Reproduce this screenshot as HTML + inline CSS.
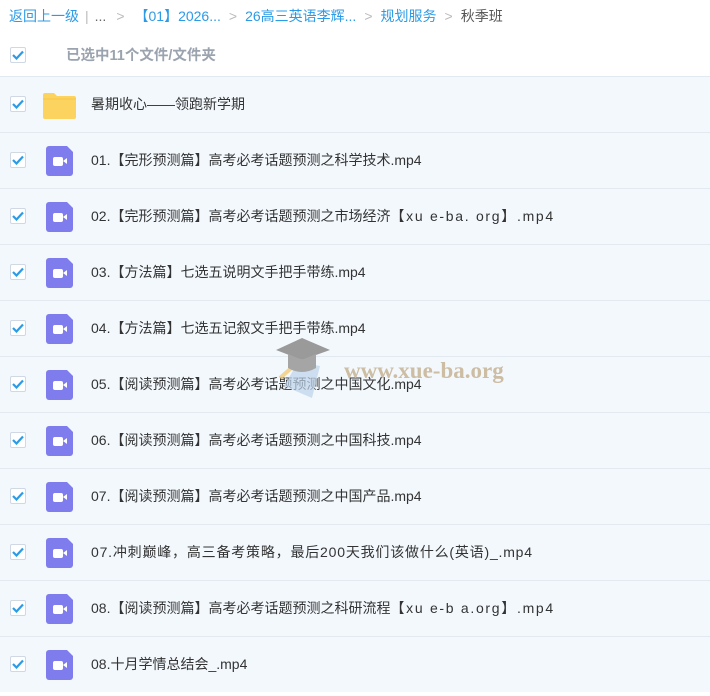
<!DOCTYPE html>
<html><head><meta charset="utf-8"><style>
*{margin:0;padding:0;box-sizing:border-box}
body{width:710px;height:696px;background:#fff;font-family:"Liberation Sans","Noto Sans CJK SC",sans-serif;font-size:14px;color:#333;position:relative;overflow:hidden}
.bc{position:absolute;left:9px;top:6px;height:20px;line-height:20px;color:#2c9be6;white-space:nowrap}
.bc .g{color:#bbb;margin:0 6px}
.bc .d{color:#555}
.cb{position:absolute;width:16px;height:16px;border:1px solid #cfd8e3;border-radius:2px;background:#fff}
.cb svg{position:absolute;left:1px;top:2px}
.hd{position:absolute;top:46px;left:0;width:710px;height:20px}
.hd .t{position:absolute;left:66px;top:0;line-height:20px;color:#9aa3ae;font-weight:bold;font-size:14.5px}
.row{position:absolute;left:0;width:710px;height:56px;background:#f3f8fd;border-top:1px solid #e3e9f0}
.row .cb{left:10px;top:19px}
.row .n{position:absolute;left:91px;top:0;line-height:55px;white-space:nowrap}
.vi{position:absolute;left:46px;top:13px;width:27px;height:30px;background:#7f7ced;border-radius:3px}
.vi:after{content:"";position:absolute;right:0;top:0;border-style:solid;border-width:0 6px 6px 0;border-color:transparent #f3f8fd transparent transparent}
.vi i{position:absolute;left:7px;top:11px;width:10px;height:9px;background:#fff;border-radius:2px}
.vi b{position:absolute;left:17px;top:12px;width:0;height:0;border-top:3.5px solid transparent;border-bottom:3.5px solid transparent;border-right:4px solid #fff}
.fo{position:absolute;left:43px;top:15px;width:33px;height:27px}
.w{letter-spacing:1.7px}
</style></head><body>
<div class="bc">返回上一级<span class="g">|</span><span class="d" style="color:#666">...</span><span class="g" style="margin:0 10px">&gt;</span>【01】2026...<span class="g" style="margin:0 8px">&gt;</span>26高三英语李辉...<span class="g" style="margin:0 8px">&gt;</span>规划服务<span class="g" style="margin:0 8px">&gt;</span><span class="d">秋季班</span></div>
<div class="hd"><div class="cb" style="left:10px;top:1px"><svg width="12" height="10" viewBox="0 0 12 10"><path d="M1 5l3.5 3.5L11 1.5" stroke="#2c9be6" stroke-width="2.2" fill="none"/></svg></div><div class="t">已选中11个文件/文件夹</div></div>

<div class="row" style="top:76px"><div class="cb"><svg width="12" height="10" viewBox="0 0 12 10"><path d="M1 5l3.5 3.5L11 1.5" stroke="#2c9be6" stroke-width="2.2" fill="none"/></svg></div>
<svg class="fo" viewBox="0 0 33 27"><path d="M0 3a2 2 0 0 1 2-2h9l3 3h17a2 2 0 0 1 2 2v19a2 2 0 0 1-2 2H2a2 2 0 0 1-2-2z" fill="#fdd35f"/><path d="M0 7h33" stroke="#f7c64a" stroke-width="1"/></svg>
<div class="n">暑期收心——领跑新学期</div></div>

<div class="row" style="top:132px"><div class="cb"><svg width="12" height="10" viewBox="0 0 12 10"><path d="M1 5l3.5 3.5L11 1.5" stroke="#2c9be6" stroke-width="2.2" fill="none"/></svg></div><div class="vi"><i></i><b></b></div><div class="n">01.【完形预测篇】高考必考话题预测之科学技术.mp4</div></div>
<div class="row" style="top:188px"><div class="cb"><svg width="12" height="10" viewBox="0 0 12 10"><path d="M1 5l3.5 3.5L11 1.5" stroke="#2c9be6" stroke-width="2.2" fill="none"/></svg></div><div class="vi"><i></i><b></b></div><div class="n">02.【完形预测篇】高考必考话题预测之市场经济<span class="w">【xu e-ba. org】.mp4</span></div></div>
<div class="row" style="top:244px"><div class="cb"><svg width="12" height="10" viewBox="0 0 12 10"><path d="M1 5l3.5 3.5L11 1.5" stroke="#2c9be6" stroke-width="2.2" fill="none"/></svg></div><div class="vi"><i></i><b></b></div><div class="n">03.【方法篇】七选五说明文手把手带练.mp4</div></div>
<div class="row" style="top:300px"><div class="cb"><svg width="12" height="10" viewBox="0 0 12 10"><path d="M1 5l3.5 3.5L11 1.5" stroke="#2c9be6" stroke-width="2.2" fill="none"/></svg></div><div class="vi"><i></i><b></b></div><div class="n">04.【方法篇】七选五记叙文手把手带练.mp4</div></div>
<div class="row" style="top:356px"><div class="cb"><svg width="12" height="10" viewBox="0 0 12 10"><path d="M1 5l3.5 3.5L11 1.5" stroke="#2c9be6" stroke-width="2.2" fill="none"/></svg></div><div class="vi"><i></i><b></b></div><div class="n">05.【阅读预测篇】高考必考话题预测之中国文化.mp4</div></div>
<div class="row" style="top:412px"><div class="cb"><svg width="12" height="10" viewBox="0 0 12 10"><path d="M1 5l3.5 3.5L11 1.5" stroke="#2c9be6" stroke-width="2.2" fill="none"/></svg></div><div class="vi"><i></i><b></b></div><div class="n">06.【阅读预测篇】高考必考话题预测之中国科技.mp4</div></div>
<div class="row" style="top:468px"><div class="cb"><svg width="12" height="10" viewBox="0 0 12 10"><path d="M1 5l3.5 3.5L11 1.5" stroke="#2c9be6" stroke-width="2.2" fill="none"/></svg></div><div class="vi"><i></i><b></b></div><div class="n">07.【阅读预测篇】高考必考话题预测之中国产品.mp4</div></div>
<div class="row" style="top:524px"><div class="cb"><svg width="12" height="10" viewBox="0 0 12 10"><path d="M1 5l3.5 3.5L11 1.5" stroke="#2c9be6" stroke-width="2.2" fill="none"/></svg></div><div class="vi"><i></i><b></b></div><div class="n" style="letter-spacing:0.8px">07.冲刺巅峰，高三备考策略，最后200天我们该做什么(英语)_.mp4</div></div>
<div class="row" style="top:580px"><div class="cb"><svg width="12" height="10" viewBox="0 0 12 10"><path d="M1 5l3.5 3.5L11 1.5" stroke="#2c9be6" stroke-width="2.2" fill="none"/></svg></div><div class="vi"><i></i><b></b></div><div class="n">08.【阅读预测篇】高考必考话题预测之科研流程<span class="w">【xu e-b a.org】.mp4</span></div></div>
<div class="row" style="top:636px"><div class="cb"><svg width="12" height="10" viewBox="0 0 12 10"><path d="M1 5l3.5 3.5L11 1.5" stroke="#2c9be6" stroke-width="2.2" fill="none"/></svg></div><div class="vi"><i></i><b></b></div><div class="n">08.十月学情总结会_.mp4</div></div>

<svg style="position:absolute;left:274px;top:336px" width="240" height="68" viewBox="0 0 240 68">
<path d="M10 50 L24 26 L46 30 L38 62 Z" fill="#bcd3ea" opacity="0.7"/>
<path d="M6 42 L22 28" stroke="#f2c66a" stroke-width="4" opacity="0.7"/>
<path d="M2 14 L28 2 L56 14 L28 24 Z" fill="#9a9a9a"/>
<path d="M14 18 L14 32 Q28 40 42 32 L42 18 L28 24 Z" fill="#a5a5a5"/>
<text x="70" y="42" font-family="Liberation Serif,serif" font-weight="bold" font-size="23" fill="#c8b79a" opacity="0.9">www.xue-ba.org</text>
</svg>
</body></html>
